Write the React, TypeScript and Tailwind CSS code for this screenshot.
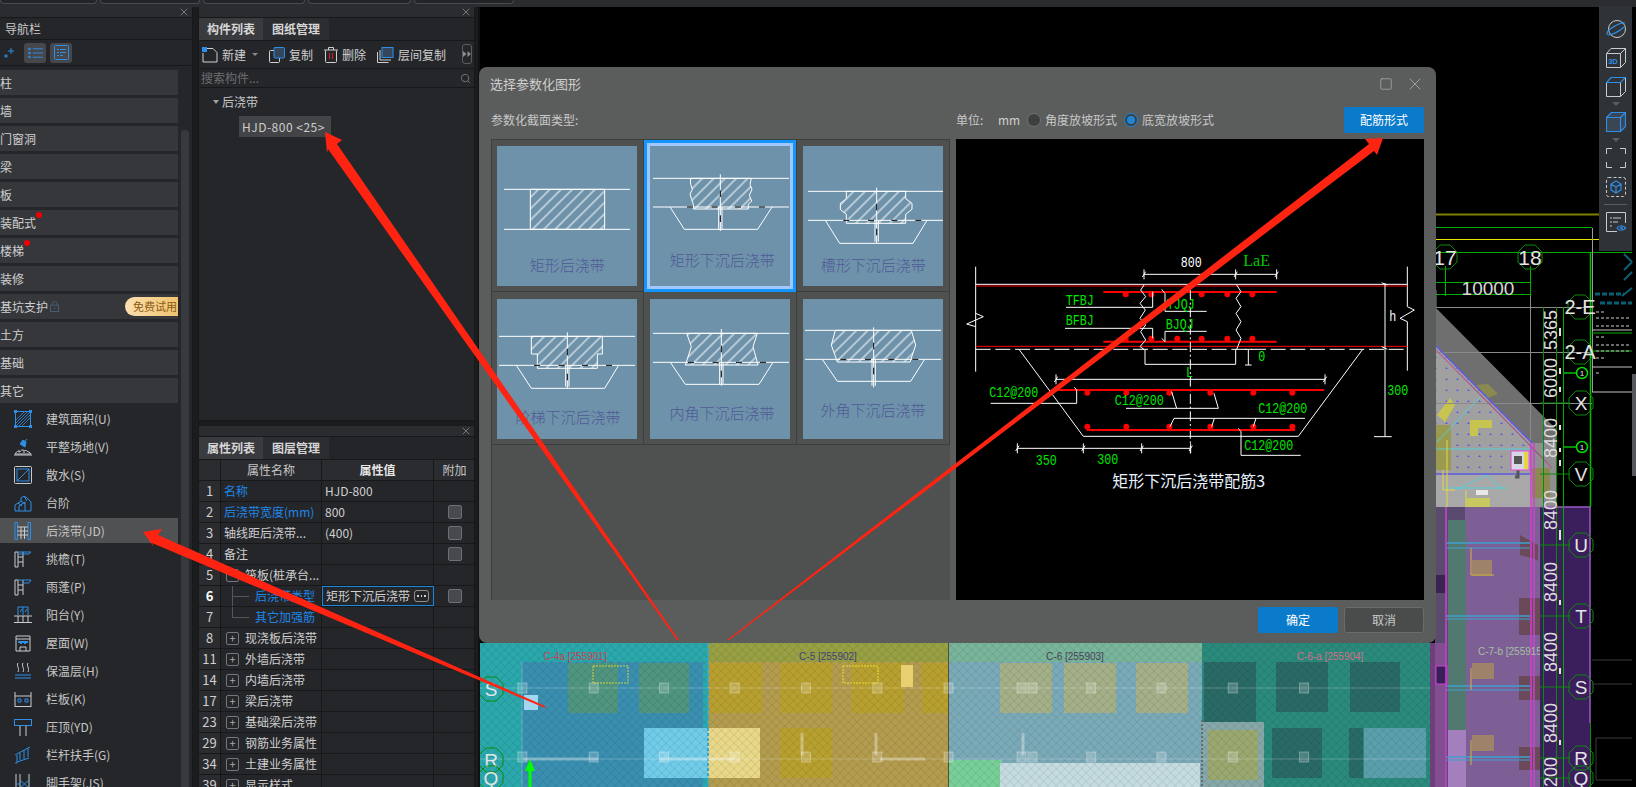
import { ReactNode } from 'react'
import { X, Square, Search } from 'lucide-react'

const BLUE = '#2f8fe6'
const GRAY = '#c9ccce'

const sections = ['柱', '墙', '门窗洞', '梁', '板', '装配式', '楼梯', '装修', '基坑支护', '土方', '基础', '其它']

function NavIcon({ children }: { children: ReactNode }) {
  return (
    <svg viewBox="0 0 18 18" fill="none" strokeWidth="1" className="w-[18px] h-[18px] shrink-0">
      {children}
    </svg>
  )
}

const navItems: { label: string; icon: ReactNode; active?: boolean }[] = [
  {
    label: '建筑面积(U)',
    icon: (
      <>
        <rect x="1.5" y="1.5" width="15" height="15" stroke={BLUE} />
        <path d="M2 10 10 2M2 16 16 2M8 16 16 8M2 13 13 2M5 16 16 5" stroke={BLUE} strokeWidth=".8" />
        <path d="M0 0h3v3H0zM15 0h3v3h-3zM0 15h3v3H0zM15 15h3v3h-3z" fill={BLUE} />
      </>
    ),
  },
  {
    label: '平整场地(V)',
    icon: (
      <>
        <path d="M13 1 9 6M6 6l5 3 1-5-3-2z" stroke={BLUE} fill={BLUE} />
        <path d="M1 16c2-3 3-3 4-2s2-3 4-2 3 0 4 1 3 1 4 3zM0 17h18" stroke={GRAY} />
        <path d="M4 13h2M9 14h2" stroke={GRAY} />
      </>
    ),
  },
  {
    label: '散水(S)',
    icon: (
      <>
        <rect x=".5" y=".5" width="17" height="17" rx="1" stroke={GRAY} />
        <rect x="3" y="3" width="12" height="12" stroke={BLUE} />
        <path d="M3 15 15 3" stroke={BLUE} />
      </>
    ),
  },
  {
    label: '台阶',
    icon: (
      <>
        <path d="M1 11 7 7V4l3-2 3 2 4 4v9H1z" stroke={BLUE} />
        <path d="M5 17v-5l6-4v9M7 7l4 3M4 9l4 3M10 2l3 5" stroke={BLUE} />
      </>
    ),
  },
  {
    label: '后浇带(JD)',
    active: true,
    icon: (
      <>
        <path d="M1 .5h2.5v17H1zM14 .5h2.5v17H14z" stroke={BLUE} />
        <path d="M3.5 5H14M3.5 9H14M3.5 13H14M7 5v12M10.500 5v12" stroke={GRAY} />
      </>
    ),
  },
  {
    label: '挑檐(T)',
    icon: (
      <>
        <path d="M1 2h3v15H1zM4 7h5M4 12h5M9 2v15" stroke={GRAY} />
        <path d="M4 2h13l-2 2H4" stroke={BLUE} />
      </>
    ),
  },
  {
    label: '雨蓬(P)',
    icon: (
      <>
        <path d="M1 2h3v15H1zM4 7h5M4 12h5M9 2v15" stroke={GRAY} />
        <path d="M4 2h13l-2 3H9" stroke={BLUE} />
      </>
    ),
  },
  {
    label: '阳台(Y)',
    icon: (
      <>
        <path d="M4 9V1h10v8M9 1v8M6 6l2-3M11 6l2-3" stroke={BLUE} />
        <path d="M0 10h18M0 16.500h18M4 10v7M9 10v7M14 10v7" stroke={GRAY} />
      </>
    ),
  },
  {
    label: '屋面(W)',
    icon: (
      <>
        <path d="M2 2h14v15H2zM2 5h14" stroke={GRAY} />
        <path d="M4 8h10M7 8v2M11 8v2" stroke={BLUE} strokeWidth="2" />
        <path d="M6 17v-4h6v4" stroke={GRAY} />
      </>
    ),
  },
  {
    label: '保温层(H)',
    icon: (
      <>
        <path d="M4 1c-2 3 2 5 0 9M9 1c-2 3 2 5 0 9M14 1c-2 3 2 5 0 9" stroke={GRAY} />
        <path d="M1 13h16M1 16h16" stroke={BLUE} />
      </>
    ),
  },
  {
    label: '栏板(K)',
    icon: (
      <>
        <path d="M1 2v15M17 2v15M1 16.500h16M1 6h16" stroke={GRAY} />
        <path d="M4 9h3v3H4zM11 9h3v3h-3z" stroke={BLUE} />
      </>
    ),
  },
  {
    label: '压顶(YD)',
    icon: (
      <>
        <rect x=".5" y="1.500" width="17" height="6" stroke={BLUE} />
        <path d="M6 8v10M12 8v10" stroke={GRAY} />
      </>
    ),
  },
  {
    label: '栏杆扶手(G)',
    icon: (
      <>
        <path d="M1 9 16 1M1 17h2V9M6 14V7M10 13V4M14 11V2M3 16l12-4" stroke={BLUE} />
      </>
    ),
  },
  {
    label: '脚手架(JS)',
    icon: (
      <>
        <path d="M2 0v18M6 0v18M15 0v18" stroke={GRAY} />
        <path d="M6 6l9 8M15 6l-9 8M2 10h4" stroke={BLUE} />
      </>
    ),
  },
]

type PropRow = { no: number; name: string; value?: string; blue?: boolean; check?: boolean; tree?: 'minus' | 'plus' | 'child' | 'last'; selected?: boolean }

const propRows: PropRow[] = [
  { no: 1, name: '名称', value: 'HJD-800', blue: true },
  { no: 2, name: '后浇带宽度(mm)', value: '800', blue: true, check: true },
  { no: 3, name: '轴线距后浇带...', value: '(400)', check: true },
  { no: 4, name: '备注', check: true },
  { no: 5, name: '筏板(桩承台...', tree: 'minus' },
  { no: 6, name: '后浇带类型', value: '矩形下沉后浇带', blue: true, check: true, tree: 'child', selected: true },
  { no: 7, name: '其它加强筋', blue: true, tree: 'last' },
  { no: 8, name: '现浇板后浇带', tree: 'plus' },
  { no: 11, name: '外墙后浇带', tree: 'plus' },
  { no: 14, name: '内墙后浇带', tree: 'plus' },
  { no: 17, name: '梁后浇带', tree: 'plus' },
  { no: 23, name: '基础梁后浇带', tree: 'plus' },
  { no: 29, name: '钢筋业务属性', tree: 'plus' },
  { no: 34, name: '土建业务属性', tree: 'plus' },
  { no: 39, name: '显示样式', tree: 'plus' },
]

function PanelHead() {
  return (
    <div className="h-[11px] bg-[#2b2c2f] border-b border-[#17181a] flex items-center justify-end pr-[2px] shrink-0">
      <X className="w-[12px] h-[12px] text-[#75777a]" strokeWidth={2} />
    </div>
  )
}

function Tabs({ first, second }: { first: string; second: string }) {
  return (
    <div className="h-[23px] flex items-end bg-[#242528] border-b border-[#17181a] shrink-0">
      <div className="w-[64px] h-[22px] bg-[#3a3b3e] flex items-center justify-center text-[12px] font-bold text-[#d6d6d6]">{first}</div>
      <div className="w-[66px] h-[22px] bg-[#2c2d30] flex items-center justify-center text-[12px] font-bold text-[#d6d6d6]">{second}</div>
    </div>
  )
}

function Navigator() {
  return (
    <aside className="w-[193px] shrink-0 flex flex-col bg-[#25262a] border-r border-[#17181a] overflow-hidden">
      <PanelHead />
      <div className="h-[22px] flex items-center pl-[5px] text-[12px] text-[#c9c9c9] border-b border-[#17181a] shrink-0">导航栏</div>
      <div className="h-[26px] flex items-center gap-[4px] border-b border-[#17181a] shrink-0 pl-[3px]">
        <svg viewBox="0 0 12 12" className="w-[12px] h-[12px] mr-[5px]" fill="none" stroke={BLUE} strokeWidth="1">
          <path d="M8 1v6M5 4h6M3 7v4M1 9h4" />
        </svg>
        <div className="w-[22px] h-[20px] rounded-[3px] bg-[#45474b] flex items-center justify-center">
          <svg viewBox="0 0 16 12" className="w-[15px] h-[12px]" fill="none" stroke={BLUE} strokeWidth="1">
            <path d="M5 1.500h11M5 6h11M5 10.500h11M.5 1h2v1.500h-2zM.5 5.200h2v1.500h-2zM.5 9.500h2V11h-2z" />
          </svg>
        </div>
        <div className="w-[22px] h-[20px] rounded-[3px] bg-[#45474b] flex items-center justify-center">
          <svg viewBox="0 0 15 15" className="w-[15px] h-[15px]" fill="none" stroke={BLUE} strokeWidth="1">
            <rect x=".5" y=".5" width="14" height="14" rx="1" />
            <path d="M3 4.500h2M6 4.500h6M3 7.500h2M6 7.500h6M3 10.500h2M6 10.500h3" />
          </svg>
        </div>
      </div>
      <div className="flex flex-1 pt-[4px] min-h-0">
        <div className="w-[178px] shrink-0">
          {sections.map(s => (
            <div key={s} className="relative h-[25px] mb-[3px] bg-[#36373b] flex items-center text-[12px] text-[#cfcfcf]">
              {s}
              {s === '装配式' && <span className="absolute left-[36px] top-[2px] w-[6px] h-[6px] rounded-full bg-[#f00000]" />}
              {s === '楼梯' && <span className="absolute left-[24px] top-[2px] w-[6px] h-[6px] rounded-full bg-[#f00000]" />}
              {s === '基坑支护' && (
                <>
                  <svg viewBox="0 0 10 12" className="ml-[2px] w-[9px] h-[11px]" fill="none" stroke="#4a607c" strokeWidth="1">
                    <rect x=".5" y="4.500" width="9" height="7" />
                    <path d="M2.500 4.500V2.500a2.500 2 0 0 1 5 0v2M5 7v2" />
                  </svg>
                  <span className="absolute right-0 top-[3px] w-[53px] h-[19px] rounded-l-full bg-gradient-to-r from-[#fbe0ae] to-[#f0c26e] flex items-center justify-end pr-[1px] text-[11px] text-[#8b5a12]">
                    免费试用
                  </span>
                </>
              )}
            </div>
          ))}
          {navItems.map(item => (
            <div
              key={item.label}
              className={`h-[25px] mb-[3px] flex items-center gap-[14px] pl-[14px] text-[12px] text-[#c6c6c6] ${item.active ? 'bg-[#505153]' : ''}`}
            >
              {item.icon && <NavIcon>{item.icon}</NavIcon>}
              {item.label}
            </div>
          ))}
        </div>
        <div className="w-[8px] ml-[3px] mt-[60px] bg-[#38393d] rounded-t-[4px]" />
      </div>
    </aside>
  )
}

function ToolbarButton({ icon, label, caret }: { icon: ReactNode; label: string; caret?: boolean }) {
  return (
    <div className="flex items-center gap-[4px] text-[12px] text-[#cfcfcf]">
      {icon}
      {label}
      {caret && <span className="ml-[2px] w-0 h-0 border-x-[3px] border-x-transparent border-t-[3px] border-t-[#8a8a8a]" />}
    </div>
  )
}

function ComponentPanel() {
  return (
    <section className="h-[414px] flex flex-col bg-[#25262a] border-b border-[#17181a] shrink-0">
      <PanelHead />
      <Tabs first="构件列表" second="图纸管理" />
      <div className="h-[28px] flex items-center gap-[11px] pl-[3px] border-b border-[#17181a] relative shrink-0">
        <ToolbarButton
          caret
          label="新建"
          icon={
            <svg viewBox="0 0 16 16" className="w-[16px] h-[16px]" fill="none">
              <path d="M4.500 1.500H11l4 4v9.500H1V6" stroke="#d0d0d0" />
              <rect x="0" y="0" width="5" height="5" fill={BLUE} />
            </svg>
          }
        />
        <ToolbarButton
          label="复制"
          icon={
            <svg viewBox="0 0 16 16" className="w-[16px] h-[16px]" fill="none">
              <rect x=".5" y="3.500" width="10" height="12" rx="1" stroke="#d0d0d0" />
              <rect x="5" y=".5" width="10.500" height="10.500" rx="1" fill="#33465e" stroke={BLUE} />
            </svg>
          }
        />
        <ToolbarButton
          label="删除"
          icon={
            <svg viewBox="0 0 14 16" className="w-[14px] h-[16px]" fill="none">
              <path d="M1.500 3.500v11a1 1 0 0 0 1 1h9a1 1 0 0 0 1-1v-11M0 3h14M4.500 3V.5h5V3" stroke="#d0d0d0" />
              <path d="M5.500 6v6M8.500 6v6" stroke="#e02020" />
            </svg>
          }
        />
        <ToolbarButton
          label="层间复制"
          icon={
            <svg viewBox="0 0 17 16" className="w-[17px] h-[16px]" fill="none">
              <path d="M.5 5v10.500h11M3 3v10h11" stroke="#d0d0d0" />
              <rect x="5" y=".5" width="11" height="10" fill="#33465e" stroke={BLUE} />
            </svg>
          }
        />
        <div className="absolute right-[2px] top-[3px] w-[10px] h-[20px] rounded-[3px] border border-[#5a5c60] flex items-center justify-center">
          <svg viewBox="0 0 8 6" className="w-[8px] h-[6px]" fill="#8d8f92">
            <path d="M0 0 3.500 3 0 6zM4.500 0 8 3 4.500 6z" />
          </svg>
        </div>
      </div>
      <div className="h-[19px] flex items-center justify-between px-[2px] border-b border-[#17181a] text-[12px] text-[#6c6d70] shrink-0">
        搜索构件...
        <Search className="w-[11px] h-[11px] text-[#75777a] mr-[1px]" />
      </div>
      <div className="pt-[4px] pl-[14px] text-[12px] text-[#c9c9c9]">
        <div className="flex items-center gap-[3px] h-[20px]">
          <span className="w-0 h-0 border-x-[3px] border-x-transparent border-t-[4px] border-t-[#a0a0a0]" />
          后浇带
        </div>
        <div className="ml-[26px] mt-[4px] w-[92px] h-[21px] bg-[#434447] flex items-center pl-[3px] text-[#cdcdcd] tracking-[.5px] whitespace-pre">
          {'HJD-800 <25>'}
        </div>
      </div>
    </section>
  )
}

function TreeMark({ kind }: { kind?: PropRow['tree'] }) {
  if (kind === 'plus' || kind === 'minus') {
    return (
      <span className="w-[13px] h-[13px] mr-[6px] ml-[2px] rounded-[2px] border border-[#75777a] flex items-center justify-center text-[11px] leading-none text-[#a9a9a9] shrink-0">
        {kind === 'plus' ? '+' : '−'}
      </span>
    )
  }
  if (kind === 'child' || kind === 'last') {
    return (
      <span className="relative w-[31px] h-[21px] shrink-0">
        <span className={`absolute left-[8px] top-0 w-px bg-[#55575a] ${kind === 'child' ? 'h-[21px]' : 'h-[10px]'}`} />
        <span className="absolute left-[8px] top-[10px] w-[17px] h-px bg-[#55575a]" />
      </span>
    )
  }
  return null
}

function PropertyPanel() {
  return (
    <section className="flex-1 min-h-0 mt-[5px] flex flex-col bg-[#25262a] overflow-hidden">
      <PanelHead />
      <Tabs first="属性列表" second="图层管理" />
      <div className="grid grid-cols-[22px_101px_112px_41px] w-[276px] h-[21px] text-[12px] text-[#c6c6c6] border-b border-[#17181a] shrink-0">
        <div className="bg-[#2b2c2f] border-r border-[#17181a]" />
        <div className="bg-[#2b2c2f] border-r border-[#17181a] flex items-center justify-center">属性名称</div>
        <div className="bg-[#2b2c2f] border-r border-[#17181a] flex items-center justify-center font-bold text-[#e6e6e6]">属性值</div>
        <div className="bg-[#2b2c2f] flex items-center justify-center">附加</div>
      </div>
      {propRows.map(r => (
        <div key={r.no} className="grid grid-cols-[22px_101px_112px_41px] w-[276px] h-[21px] text-[12px] text-[#cfcfcf] border-b border-[#17181a] shrink-0">
          <div className={`flex items-center justify-center border-r border-[#17181a] bg-[#2b2c2f] text-[13px] ${r.selected ? 'font-bold text-white' : ''}`}>{r.no}</div>
          <div className={`flex items-center pl-[3px] border-r border-[#17181a] whitespace-nowrap overflow-hidden ${r.blue ? 'text-[#1f86e8]' : ''}`}>
            <TreeMark kind={r.tree} />
            {r.name}
          </div>
          <div className={`flex items-center pl-[3px] whitespace-nowrap ${r.selected ? 'border border-[#1a86dc] justify-between pr-[4px]' : 'border-r border-[#17181a]'}`}>
            {r.value}
            {r.selected && (
              <span className="w-[15px] h-[12px] rounded-[3px] border border-[#8d8f92] flex items-center justify-center gap-[2px]">
                <span className="w-[1.5px] h-[1.5px] bg-[#cfcfcf]" />
                <span className="w-[1.5px] h-[1.5px] bg-[#cfcfcf]" />
                <span className="w-[1.5px] h-[1.5px] bg-[#cfcfcf]" />
              </span>
            )}
          </div>
          <div className="flex items-center justify-center">
            {r.check && <span className="w-[14px] h-[14px] rounded-[2px] bg-[#48494c] border border-[#6d6f72]" />}
          </div>
        </div>
      ))}
    </section>
  )
}

function Hatch({ id }: { id: string }) {
  return (
    <pattern id={id} width="24" height="24" patternUnits="userSpaceOnUse" patternTransform="rotate(-45)">
      <line x1="0" y1="12" x2="24" y2="12" stroke="#fff" strokeWidth="3" />
    </pattern>
  )
}

type Thumb = { label: string; cx: number; base: number; lines: [number, number, number, number]; shape: string; trap: string; mid: number; top: number; bottom: number; shift: number }

const thumbs: Thumb[] = [
  { label: '矩形后浇带', cx: 211, base: 375, lines: [21, 399, 130, 250], shape: 'M100 130H323V250H100Z', trap: '', mid: 0, top: 0, bottom: 0, shift: 0 },
  {
    label: '矩形下沉后浇带', cx: 217, base: 360, lines: [9, 417, 97, 183],
    shape: 'M121 97H304L300 115 306 130 298 148 305 165 295 175V189H130V175L125 160 120 145 127 130 122 115Z',
    trap: 'M60 183 103 250H323L366 183', mid: 211, top: 85, bottom: 255, shift: 183,
  },
  {
    label: '槽形下沉后浇带', cx: 211, base: 375, lines: [15, 420, 136, 223],
    shape: 'M130 136H308V158L327 172V190L308 205V232H130V205L112 190V172L130 158Z',
    trap: 'M67 223 110 292H330L372 223', mid: 221, top: 125, bottom: 292, shift: 223,
  },
  {
    label: '阶梯下沉后浇带', cx: 213, base: 371, lines: [6, 414, 112, 199],
    shape: 'M103 112H316V165H301V208H121V165H103Z',
    trap: 'M58 199 103 268H323L365 199', mid: 211, top: 100, bottom: 268, shift: 199,
  },
  {
    label: '内角下沉后浇带', cx: 216, base: 360, lines: [9, 417, 103, 190],
    shape: 'M110 103H322L309 143 324 198H106L124 143Z',
    trap: 'M61 190 106 256H327L369 190', mid: 214, top: 90, bottom: 260, shift: 190,
  },
  {
    label: '外角下沉后浇带', cx: 210, base: 351, lines: [6, 414, 94, 181],
    shape: 'M97 94H325L338 138 321 189H103L85 138Z',
    trap: 'M58 181 103 247H323L365 181', mid: 212, top: 85, bottom: 265, shift: 181,
  },
]

function ThumbCell({ t, i }: { t: Thumb; i: number }) {
  const id = `hatch-${i}`
  return (
    <div className="w-[153px] h-[153px] border-r border-b border-[#3d3e3e] pl-[6px] pt-[7px]">
      <div className={`w-[140px] h-[140px] bg-[#6e92aa] ${i === 1 ? 'shadow-[0_0_0_3px_#a0c8ff,0_0_0_6px_#1495ff]' : ''}`}>
        <svg viewBox="0 0 420 420" className="w-[140px] h-[140px]" fill="none" stroke="#fff" strokeWidth="3">
          <defs>
            <Hatch id={id} />
          </defs>
          <path d={`M${t.lines[0]} ${t.lines[2]}H${t.lines[1]}M${t.lines[0]} ${t.lines[3]}H${t.lines[1]}`} />
          <path d={t.shape} fill={`url(#${id})`} />
          {t.trap && <path d={t.trap} />}
          {t.mid > 0 && (
            <>
              <path d={`M${t.mid} ${t.top}V${t.bottom}`} />
              <path d={`M${t.mid - 5} ${t.shift}V${t.bottom - 5}M${t.mid + 5} ${t.shift}V${t.bottom - 5}`} />
              <path
                d={`M${t.mid - 100} ${t.shift}h18M${t.mid - 26} ${t.shift}h18M${t.mid + 44} ${t.shift}h18M${t.mid + 116} ${t.shift}h18M${t.mid} ${t.shift - 50}v20M${t.mid} ${t.shift + 25}v20`}
                stroke="#000"
              />
            </>
          )}
          <text x={t.cx} y={t.base} textAnchor="middle" fontSize="45" fill="#4f5a96" stroke="none" className="font-['Noto_Sans_CJK_SC',sans-serif] font-light">
            {t.label}
          </text>
        </svg>
      </div>
    </div>
  )
}

function Rebar({ xs, y }: { xs: number[]; y: number }) {
  return (
    <>
      {xs.map(x => (
        <circle key={x} cx={x} cy={y} r="9" fill="#f00" stroke="none" />
      ))}
    </>
  )
}

function Tick({ x, y }: { x: number; y: number }) {
  return <path d={`M${x} ${y - 15}V${y + 15}M${x - 5} ${y + 8}L${x + 5} ${y - 8}`} />
}

// CAD labels are narrow and tall, so the mono face gets stretched a little
function CadText({ x, y, children, fill = '#00e600' }: { x: number; y: number; children: string; fill?: string }) {
  return (
    <text
      transform={`translate(${x} ${y}) scale(1 1.3)`}
      fill={fill}
      stroke="none"
      fontSize="35"
      className="font-['Liberation_Mono',monospace]"
    >
      {children}
    </text>
  )
}

// viewBox is the reference zoomed 3x, so one screen pixel is stroke 3
function Reinforcement() {
  return (
    <svg viewBox="18 -333 1404 1383" className="w-[468px] h-[461px] block" fill="none" stroke="#fff" strokeWidth="3">
      <path d="M77 50V365M1372 50V170L1393 180 1350 205 1372 215V362M77 190 100 200 50 222 77 230" strokeWidth="3" fill="#000" />
      <path d="M77 103H1372" />
      <path d="M77 108H1372M77 289H1372" stroke="#f00" />
      <path d="M77 298H1372" strokeDasharray="45 14" />
      <path d="M460 126H980M460 275H980" stroke="#f00" strokeWidth="6" />
      <Rebar xs={[527, 604, 755, 832, 907]} y={133} />
      <Rebar xs={[527, 604, 682, 755, 832, 907]} y={266} />
      <path d="M582 73H980" />
      <Tick x={582} y={73} />
      <Tick x={857} y={73} />
      <Tick x={980} y={73} />
      <path d="M582 105 572 120 587 140 570 160 586 180 570 205 587 225 572 245 587 270 570 290 582 298M860 105 873 125 858 145 873 170 858 190 873 215 858 240 873 265 860 298" />
      <path d="M348 172H608V125M345 235H608V265M770 184H645V130L635 118M770 244H645V275L635 265M585 298V343H857V298M895 298V345M885 345H905M885 298H905" />
      <path d="M721 120V610" strokeDasharray="30 8 6 8" />
      <path d="M318 388H1125" />
      <Tick x={318} y={388} />
      <Tick x={1125} y={388} />
      <path d="M305 420H1122" stroke="#f00" strokeWidth="6" />
      <path d="M410 540H1035" stroke="#f00" strokeWidth="6" />
      <Rebar xs={[412, 529, 658, 781, 910, 1027]} y={428} />
      <Rebar xs={[412, 529, 658, 781, 910, 1027]} y={530} />
      <path d="M207 298 400 559H1045L1238 298" />
      <path d="M122 460H380V420L373 412M528 475H805L792 430M680 475 665 425M1065 505H672L660 530M793 505 785 530M918 505 910 530M1052 616H873V545L865 535" />
      <path d="M202 595H722" />
      <Tick x={202} y={595} />
      <Tick x={400} y={595} />
      <Tick x={575} y={595} />
      <Tick x={722} y={595} />
      <path d="M1305 100V560M1272 560H1325M1295 98 1312 105M1295 290 1312 298" />
      <CadText x={692} y={50} fill="#fff">800</CadText>
      <text x={880} y={48} fill="#00c800" stroke="none" fontSize="48" className="font-['Liberation_Serif',serif]">LaE</text>
      <CadText x={347} y={165}>TFBJ</CadText>
      <CadText x={347} y={225}>BFBJ</CadText>
      <CadText x={650} y={178}>TJQJ</CadText>
      <CadText x={647} y={237}>BJQJ</CadText>
      <CadText x={925} y={334}>0</CadText>
      <CadText x={708} y={382}>L</CadText>
      <CadText x={118} y={442}>C12@200</CadText>
      <CadText x={494} y={466}>C12@200</CadText>
      <CadText x={925} y={490}>C12@200</CadText>
      <CadText x={883} y={600}>C12@200</CadText>
      <CadText x={257} y={645}>350</CadText>
      <CadText x={442} y={642}>300</CadText>
      <CadText x={1312} y={436}>300</CadText>
      <CadText x={1318} y={214} fill="#fff">h</CadText>
      <text x={487} y={712} fill="#e8f2ff" stroke="none" fontSize="48" className="font-['Noto_Sans_CJK_SC',sans-serif]">矩形下沉后浇带配筋3</text>
    </svg>
  )
}

function Radio({ on }: { on?: boolean }) {
  return (
    <span className={`w-[14px] h-[14px] rounded-full flex items-center justify-center bg-[#3e3f40] border ${on ? 'border-[#1a86dc]' : 'border-[#707172]'}`}>
      {on && <span className="w-[8px] h-[8px] rounded-full bg-[#1a86dc]" />}
    </span>
  )
}

function ParamDialog() {
  return (
    <div className="absolute left-[479px] top-[67px] w-[957px] h-[576px] rounded-[8px] bg-[#5b5d5c] px-[12px] flex flex-col text-[12px] text-[#c8c8c8]">
      <div className="h-[33px] -mx-[1px] flex items-center justify-between pt-[1px] shrink-0">
        <span className="text-[13px] text-[#cfcfcf]">选择参数化图形</span>
        <div className="flex items-center gap-[12px]">
          <Square className="w-[14px] h-[14px] text-[#9ea0a0]" strokeWidth={1.500} />
          <X className="w-[20px] h-[20px] text-[#9ea0a0]" strokeWidth={1.200} />
        </div>
      </div>
      <div className="h-[26px] mt-[7px] flex items-center shrink-0">
        <span className="w-[465px]">参数化截面类型:</span>
        <span className="w-[42px]">单位:</span>
        <span className="w-[29px] text-[#d0d0d0]">mm</span>
        <Radio />
        <span className="ml-[4px] w-[79px]">角度放坡形式</span>
        <Radio on />
        <span className="ml-[4px]">底宽放坡形式</span>
        <span className="ml-auto w-[80px] h-[26px] rounded-[2px] bg-[#0a7acb] flex items-center justify-center text-white">配筋形式</span>
      </div>
      <div className="mt-[6px] h-[461px] flex gap-[6px] shrink-0">
        <div className="w-[459px] h-[461px] bg-[#4f5050] shadow-[inset_1px_1px_0_#3d3e3e] grid grid-cols-[153px_153px_153px] content-start shrink-0">
          {thumbs.map((t, i) => (
            <ThumbCell key={t.label} t={t} i={i} />
          ))}
        </div>
        <div className="bg-black">
          <Reinforcement />
        </div>
      </div>
      <div className="flex justify-end gap-[6px] mt-[7px]">
        <span className="w-[80px] h-[26px] rounded-[2px] bg-[#0a7acb] flex items-center justify-center text-white">确定</span>
        <span className="w-[80px] h-[26px] rounded-[3px] bg-[#4a4b4b] border border-[#6a6b6b] flex items-center justify-center">取消</span>
      </div>
    </div>
  )
}

function Hex({ x, y, label, r = 13, size = 19 }: { x: number; y: number; label: string; r?: number; size?: number }) {
  const pts = Array.from({ length: 8 }, (_, i) => {
    const a = Math.PI / 8 + (i * Math.PI) / 4
    return `${(x + r * Math.cos(a)).toFixed(1)},${(y + r * Math.sin(a)).toFixed(1)}`
  }).join(' ')
  return (
    <g>
      <polygon points={pts} fill="none" stroke="#0a8a0a" strokeWidth="1" />
      <text x={x} y={y + size * 0.36} textAnchor="middle" fontSize={size} fill="#e4e4e4" className="font-['Liberation_Sans',sans-serif]">
        {label}
      </text>
    </g>
  )
}

function Bubble({ y }: { y: number }) {
  return (
    <g>
      <path d={`M1563 ${y}H1577`} stroke="#00c000" strokeWidth="1.500" />
      <circle cx="1582" cy={y} r="5.500" fill="#000" stroke="#00e000" strokeWidth="1.500" />
      <text x="1582" y={y + 3} textAnchor="middle" fontSize="8" fill="#e4e4e4" className="font-['Liberation_Sans',sans-serif]">1</text>
    </g>
  )
}

function VerticalDim({ y, label }: { y: number; label: string }) {
  return (
    <text transform={`translate(1557 ${y}) rotate(-90)`} textAnchor="middle" fontSize="18" fill="#dcdcdc" className="font-['Liberation_Sans',sans-serif]">
      {label}
    </text>
  )
}

const px = (p: number) => 478 + p / 1.823
const columnXs = [80, 210, 338, 467, 597, 727, 857, 990, 1010, 1117, 1245, 1375, 1505].map(px)

function CadCanvas() {
  return (
    <svg viewBox="478 7 1158 780" className="w-[1158px] h-[780px] block bg-black">
      <defs>
        <pattern id="plan-hatch" width="6" height="6" patternUnits="userSpaceOnUse" patternTransform="rotate(45)">
          <path d="M0 0H6M0 0V6" stroke="#000000" strokeOpacity=".14" strokeWidth="1" />
        </pattern>
        <pattern id="plan-dots" width="11" height="11" patternUnits="userSpaceOnUse">
          <path d="M4 6 5.500 4 7 6Z" fill="#5c5ce0" />
        </pattern>
      </defs>

      {/* upper axis lines */}
      <path d="M1436 214.500H1600" stroke="#808000" strokeWidth="2" />
      <path d="M1436 227.500H1592" stroke="#00b000" />
      <path d="M1436 239.500H1600" stroke="#e6e600" />
      <path d="M1436 252.500H1632" stroke="#00b000" />
      <path d="M1592.500 228V392" stroke="#9a9a9a" />
      <path d="M1436 282.500H1530M1436 294.500H1530M1445.500 266V296M1530.500 266V296" stroke="#00b000" />
      <Hex x={1445} y={257} label="17" size={21} />
      <Hex x={1530} y={257} label="18" size={21} />
      <text x={1488} y={295} textAnchor="middle" fontSize="19" fill="#d8d8d8" className="font-['Liberation_Sans',sans-serif]">10000</text>

      {/* sheet title block */}
      <path d="M1592 330H1632M1592 367H1632M1592 392H1632" stroke="#c0c0c0" />
      <path d="M1592 333H1632M1592 351H1632" stroke="#00b000" />
      <path d="M1624 254 1632 262M1632 262 1624 270M1624 280 1632 272M1622 296 1632 288" stroke="#0b5f74" strokeWidth="2" />
      <path d="M1595 294H1624M1600 303H1632" stroke="#0b5f74" strokeWidth="3" strokeDasharray="5 2" />
      <path d="M1596 312H1604M1596 318H1630M1596 326H1630M1596 337H1604M1596 345H1630M1596 351H1630M1596 358H1606M1596 373H1600" stroke="#8c8c8c" strokeDasharray="3 2" strokeWidth="1.500" />

      {/* gray wedge */}
      <path d="M1435 307 1557 430V507H1435Z" fill="#6f6f6f" />
      <path d="M1435 345 1532 443V475H1435Z" fill="#a0a0a0" />
      <path d="M1435 345 1532 443V475H1435Z" fill="url(#plan-dots)" />
      <rect x="1435" y="475" width="97" height="32" fill="#a8a8a8" />
      <rect x="1532" y="443" width="25" height="64" fill="#8f8f8f" />
      <path d="M1476 385 1488 384 1498 394 1488 398Z" fill="#8a8a50" />
      <rect x="1435" y="425" width="16" height="45" fill="#9a9a50" />
      <rect x="1532" y="468" width="18" height="30" fill="#8a8a50" />
      <path d="M1437 415 1450 398 1455 405 1445 422Z" fill="#c8c450" />
      <rect x="1470" y="420" width="22" height="8" fill="#c8c450" />
      <rect x="1470" y="428" width="8" height="8" fill="#c8c450" />
      <path d="M1436 290V307M1435 307.500H1592M1435 352.500H1592M1435 403.500H1592M1530.500 296V475" stroke="#8a8a8a" fill="none" />
      <path d="M1435 345 1532 443" stroke="#5c5ce0" strokeWidth="1.500" />
      <path d="M1435 349 1530 445 1552 468" stroke="#c84090" />
      <path d="M1437 442 1480 397M1436 449H1530M1456 490 1486 475 1505 490M1445 488H1506" stroke="#52d0d8" fill="none" />
      <path d="M1436 474H1530" stroke="#5c5ce0" strokeWidth="1.500" />
      <path d="M1515 477H1518V468" stroke="#555" strokeWidth="3" fill="none" />
      <rect x="1511" y="451" width="18" height="19" fill="#d8d8e4" stroke="#e04ad0" />
      <rect x="1514" y="456" width="8" height="8" fill="#555" />
      <rect x="1524" y="452" width="4" height="17" fill="#e6d640" />
      <path d="M1443 470V490H1455M1466 490V507M1447 440V507" stroke="#e6d640" fill="none" />
      <rect x="1466" y="498" width="24" height="9" fill="#c8c860" />
      <rect x="1476" y="490" width="12" height="5" fill="#e8e8e8" />

      {/* purple block */}
      <rect x="1435" y="507" width="108" height="280" fill="#7d5f95" />
      <rect x="1435" y="507" width="30" height="280" fill="#5a4a70" />
      <rect x="1448" y="520" width="18" height="210" fill="#52796f" />
      <rect x="1448" y="730" width="18" height="57" fill="#a47fbe" />
      <rect x="1425" y="643" width="20" height="144" fill="#8a4f9a" fillOpacity=".8" />
      <rect x="1436" y="666" width="11" height="18" fill="#36205a" stroke="#d040d0" />
      <rect x="1436" y="575" width="10" height="18" fill="#3a2450" />
      <path d="M1520 535 1538 545V560L1520 555ZM1519 598H1541V635H1519ZM1519 676H1541V700H1519ZM1519 747H1541V770H1519Z" fill="#6a4a58" />
      <path d="M1446 543H1530M1446 616H1530M1446 686H1530M1446 757H1530" stroke="#3ea0d0" strokeWidth="1.500" />
      <path d="M1446 548H1530M1446 619H1530M1446 690H1530M1446 760H1530" stroke="#3ea0d0" />
      <path d="M1446 507V787M1531 443V787M1534 443V787" stroke="#d040d0" strokeWidth="1.500" />
      <path d="M1471 548V575H1494M1471 668V690M1471 740V765" stroke="#d0b840" fill="none" />
      <rect x="1472" y="560" width="20" height="16" fill="#c0a840" fillOpacity=".5" />
      <rect x="1472" y="663" width="22" height="16" fill="#c0a840" fillOpacity=".5" />
      <rect x="1472" y="735" width="22" height="16" fill="#c0a840" fillOpacity=".5" />
      <text x="1478" y="655" fontSize="10" fill="#a5c0a0" className="font-['Liberation_Sans',sans-serif]">C-7-b [255915]</text>

      {/* dark purple strip and axis column */}
      <rect x="1540" y="507" width="50" height="280" fill="#3a1f5c" />
      <path d="M1541 507H1590V723" stroke="#9a5cc8" strokeWidth="1.500" fill="none" />
      <path d="M1543.500 307V787M1556.500 307V787" stroke="#0a8a0a" />
      <path d="M1563.500 307V787" stroke="#00b000" />
      <path d="M1590.500 252V507" stroke="#00c000" strokeWidth="1.500" />
      <path d="M1590.500 723V787" stroke="#0a8a0a" />
      <path d="M1540 403H1570M1540 474H1570M1540 545H1570M1540 616H1570M1540 687H1570M1540 758H1570M1540 778H1570" stroke="#0a8a0a" />
      <path d="M1560 328V336M1560 368V374M1560 387V392M1560 425V430M1560 448V452M1560 460V466M1560 530V540M1560 600V605M1560 668V674M1560 740V745" stroke="#e0e0e0" strokeWidth="2" />
      <VerticalDim y={330} label="5365" />
      <VerticalDim y={378} label="6000" />
      <VerticalDim y={438} label="8400" />
      <VerticalDim y={510} label="8400" />
      <VerticalDim y={582} label="8400" />
      <VerticalDim y={652} label="8400" />
      <VerticalDim y={723} label="8400" />
      <VerticalDim y={777} label="9200" />
      <Hex x={1580} y={307} label="2-E" size={20} />
      <Hex x={1580} y={352} label="2-A" size={20} />
      <Bubble y={373} />
      <Hex x={1581} y={403} label="X" />
      <Bubble y={447} />
      <Hex x={1581} y={474} label="V" />
      <Hex x={1581} y={545} label="U" />
      <Hex x={1581} y={616} label="T" />
      <Hex x={1581} y={687} label="S" />
      <Hex x={1581} y={758} label="R" />
      <Hex x={1581} y={778} label="Q" />
      <path d="M1592 660H1632M1592 684H1632M1596 738H1632M1596 738V780H1632" stroke="#3a3a3a" fill="none" />
      <rect x="1632" y="374" width="4" height="102" fill="#55575a" />

      {/* bottom plan */}
      <rect x="480" y="643" width="228" height="144" fill="#2aa8ac" />
      <rect x="522" y="662" width="181" height="125" fill="#3a8fb0" />
      <rect x="568" y="663" width="50" height="50" fill="#4f9580" />
      <rect x="639" y="663" width="50" height="50" fill="#4f9580" />
      <rect x="708" y="643" width="240" height="144" fill="#b39c4e" />
      <rect x="708" y="643" width="240" height="19" fill="#98a044" />
      <rect x="710" y="663" width="52" height="50" fill="#b8a030" />
      <rect x="780" y="663" width="52" height="50" fill="#b8a030" />
      <rect x="852" y="663" width="52" height="50" fill="#b8a030" />
      <rect x="922" y="663" width="26" height="50" fill="#b8a030" />
      <rect x="780" y="728" width="52" height="50" fill="#b8a030" />
      <rect x="644" y="728" width="64" height="50" fill="#70cce8" />
      <rect x="708" y="728" width="52" height="50" fill="#e8d888" />
      <rect x="948" y="643" width="254" height="144" fill="#7aaab8" />
      <rect x="948" y="643" width="254" height="19" fill="#78b59a" />
      <rect x="948" y="760" width="54" height="27" fill="#78d098" />
      <rect x="1000" y="763" width="200" height="24" fill="#c4dce0" />
      <rect x="1000" y="663" width="52" height="50" fill="#a4b088" />
      <rect x="1064" y="663" width="52" height="50" fill="#a4b088" />
      <rect x="1136" y="663" width="52" height="50" fill="#a4b088" />
      <rect x="1202" y="643" width="228" height="144" fill="#2a8a7c" />
      <rect x="1202" y="722" width="62" height="65" fill="#86a8a8" />
      <rect x="1208" y="730" width="50" height="50" fill="#9aa870" />
      <rect x="1204" y="662" width="52" height="60" fill="#2a6a66" />
      <rect x="1276" y="662" width="52" height="50" fill="#2a6a66" />
      <rect x="1272" y="728" width="50" height="50" fill="#2a6a66" />
      <rect x="1364" y="728" width="62" height="50" fill="#5aa0ac" />
      <rect x="1350" y="662" width="50" height="50" fill="#2a6a66" />
      <rect x="1349" y="728" width="14" height="50" fill="#2a6a66" />
      <rect x="480" y="643" width="950" height="144" fill="url(#plan-hatch)" />
      <path d="M480 688H1430M480 759H1430M522 662V787" stroke="#ffffff" strokeOpacity=".22" />
      <path d="M708 643V787" stroke="#30a8d8" strokeWidth="2" strokeDasharray="3 2" />
      <path d="M948.500 643V787" stroke="#5a4a30" />
      <path d="M1202 720V787" stroke="#6a6a6a" strokeWidth="2" strokeDasharray="2 2" />
      <path d="M660 759H735M880 759H925M523 759H598" stroke="#ffffff" strokeOpacity=".3" strokeWidth="3" />
      <path d="M802 733V755M876 733V755M1023 733V755" stroke="#ffffff" strokeOpacity=".35" strokeWidth="3" />
      {columnXs.map(x => (
        <g key={x}>
          <rect x={x - 4} y="683" width="9" height="10" fill="#ffffff" fillOpacity=".18" stroke="#ffffff" strokeOpacity=".3" />
          <rect x={x - 4} y="752" width="9" height="10" fill="#ffffff" fillOpacity=".18" stroke="#ffffff" strokeOpacity=".3" />
        </g>
      ))}
      <rect x="593" y="666" width="35" height="17" fill="none" stroke="#d4d040" strokeDasharray="2 1" />
      <rect x="843" y="666" width="35" height="17" fill="none" stroke="#e8e030" strokeDasharray="2 1" />
      <rect x="901" y="665" width="12" height="22" fill="#e8d070" />
      <rect x="524" y="695" width="14" height="15" fill="#a0d8f0" />
      <g fontSize="10" textAnchor="middle" className="font-['Liberation_Sans',sans-serif]">
        <text x="575" y="660" fill="#d04050">C-4a [255901]</text>
        <text x="828" y="660" fill="#40407a">C-5 [255902]</text>
        <text x="1075" y="660" fill="#4a4058">C-6 [255903]</text>
        <text x="1330" y="660" fill="#d07088">C-6-a [255904]</text>
      </g>
      <Hex x={491} y={689} label="S" />
      <Hex x={491} y={760} label="R" />
      <Hex x={491} y={778} label="Q" />
      <path d="M530 787V766" stroke="#00ff00" strokeWidth="3" />
      <path d="M530 759 525 771H535Z" fill="#00ff00" />
      <rect x="478" y="7" width="2" height="780" fill="#111" />
      <rect x="476" y="360" width="2" height="70" fill="#4a4b4e" />
    </svg>
  )
}

function ViewTools() {
  const s = { fill: 'none', stroke: GRAY, strokeWidth: 1 }
  const b = { fill: 'none', stroke: BLUE, strokeWidth: 1.200 }
  return (
    <div className="absolute left-[1599px] top-[6px] w-[33px] h-[245px] bg-[#2f3236] flex flex-col items-center pt-[13px]">
      <svg viewBox="0 0 20 20" className="w-[20px] h-[20px]">
        <circle cx="11" cy="10" r="8.500" {...s} />
        <path d="M1 15C0 11 14 3 19 4" {...b} />
        <path d="M1 15c2 3 13-3 17-7" {...b} />
      </svg>
      <svg viewBox="0 0 20 20" className="w-[20px] h-[20px] mt-[9px]">
        <path d="M.5 5.500h14v14H.5zM.5 5.500 5 .5h14.500v14l-5 5M14.500 5.500l5-5" {...s} />
        <text x="7" y="16" textAnchor="middle" fontSize="7.500" fontWeight="700" fill={BLUE} className="font-['Liberation_Sans',sans-serif]">3D</text>
      </svg>
      <svg viewBox="0 0 20 20" className="w-[20px] h-[20px] mt-[9px]">
        <path d="M.5 5.500v14h14v-14M14.500 19.500l5-5V.5" {...s} />
        <path d="M.5 5.500h14l5-5H5z" {...b} />
      </svg>
      <span className="mt-[5px] w-0 h-0 border-x-[4px] border-x-transparent border-t-[4px] border-t-[#5a5d62]" />
      <svg viewBox="0 0 20 20" className="w-[20px] h-[20px] mt-[6px]">
        <path d="M.5 5.500h14v14H.5zM.5 5.500l5-5h14v14l-5 5M14.500 5.500l5-5" fill="#3a4654" stroke={BLUE} strokeWidth="1.200" />
      </svg>
      <span className="mt-[6px] w-0 h-0 border-x-[4px] border-x-transparent border-t-[4px] border-t-[#5a5d62]" />
      <svg viewBox="0 0 20 20" className="w-[20px] h-[20px] mt-[6px]">
        <path d="M.5 6V.5H6M14 .5h5.500V6M19.500 14v5.500H14M6 19.500H.5V14" {...s} />
      </svg>
      <svg viewBox="0 0 20 20" className="w-[20px] h-[20px] mt-[9px]">
        <rect x=".5" y=".5" width="19" height="19" rx="2" strokeDasharray="3 2" {...s} />
        <path d="M10 4l5 3v6l-5 3-5-3V7zM5 7l5 3 5-3M10 10v6" {...b} />
      </svg>
      <div className="w-[23px] h-px bg-[#5a5d62] mt-[7px]" />
      <svg viewBox="0 0 20 20" className="w-[20px] h-[20px] mt-[7px]">
        <path d="M19.500 11V.5H.5v19H11M4 6h2M7 6h8M4 10h2M7 10h5M4 14h2" {...s} />
        <path d="M11 16c2-3 6-3 9 0-3 3-7 3-9 0z" {...b} />
        <circle cx="15.500" cy="16" r="1.300" fill={BLUE} />
      </svg>
    </div>
  )
}

function RedArrows() {
  return (
    <svg viewBox="0 0 1636 787" className="absolute inset-0 w-[1636px] h-[787px] pointer-events-none">
      <g fill="#ff2412">
        <polygon points="325,132 342,140 337,144 679,640 677,640 328,149 327,153" />
        <polygon points="1383,138 1365,139 1369,144 727,640 729,640 1374,151 1377,155" />
        <polygon points="143,532 162,529 158,535 545,706 545,708 152,543 154,547" />
      </g>
    </svg>
  )
}

export default function App() {
  return (
    <div className="relative w-[1636px] h-[787px] overflow-hidden bg-[#1b1c1e] font-['Noto_Sans_CJK_SC','Liberation_Sans',sans-serif]">
      <div className="h-[7px] flex bg-[#2b2c2f]">
        {[97, 100, 102, 103, 100].map((w, i) => (
          <div key={i} className="h-[4px] rounded-b-[4px] border-x border-b border-[#4a4b4e] mr-[3px] bg-[#232427]" style={{ width: w }} />
        ))}
      </div>
      <div className="flex h-[780px]">
        <Navigator />
        <div className="w-[277px] ml-[5px] flex flex-col shrink-0 border-x border-[#17181a]">
          <ComponentPanel />
          <PropertyPanel />
        </div>
        <div className="w-[3px] shrink-0" />
        <CadCanvas />
      </div>
      <ParamDialog />
      <ViewTools />
      <RedArrows />
    </div>
  )
}
